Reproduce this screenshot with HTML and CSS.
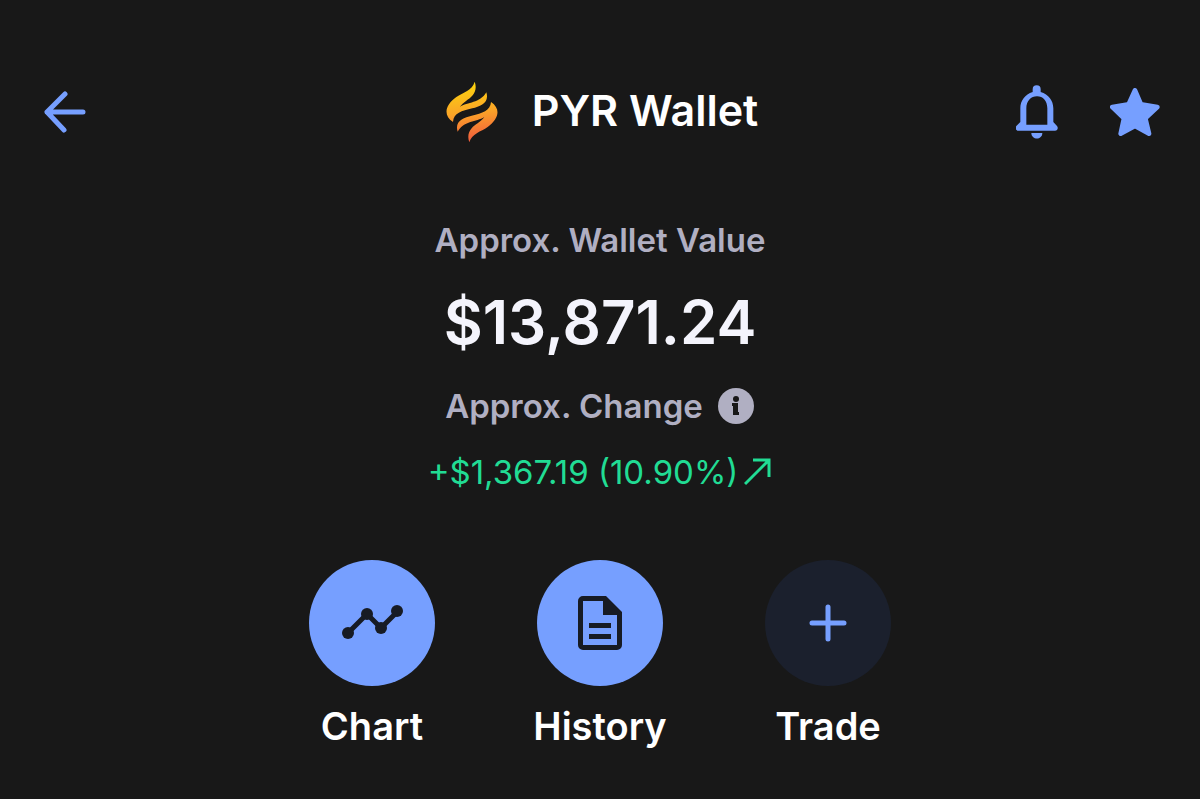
FILE: index.html
```
<!DOCTYPE html>
<html lang="en">

<head>
    <meta charset="utf-8">
    <meta name="viewport" content="width=device-width, initial-scale=1">
    <title>PYR Wallet</title>
    <link rel="stylesheet" href="styles.css">
</head>

<body>
    <header class="header">
        <button class="icon-btn back" aria-label="Back">
            <svg width="42" height="42" viewBox="0 0 42 42" fill="none" stroke="currentColor" stroke-width="5" stroke-linecap="round" stroke-linejoin="round">
                <path d="M21 3 3 21l17 18M3 21h36" />
            </svg>
        </button>

        <div class="title">
            <svg width="52" height="62" viewBox="9 4 156 186" aria-hidden="true">
                <defs>
                    <linearGradient id="flame" gradientUnits="userSpaceOnUse" x1="75" y1="6" x2="99" y2="188">
                        <stop offset="0" stop-color="#fbd60c" />
                        <stop offset="0.5" stop-color="#fba527" />
                        <stop offset="1" stop-color="#f0583f" />
                    </linearGradient>
                </defs>
                <g fill="url(#flame)">
                    <path d="M95 6C106 36 85 54 70 63C62 69 55 75 50 82C75 66 110 72 130 38C140 70 112 80 88 86C56 94 32 100 30 127C-1 106 7 76 40 52C60 38 88 32 95 6Z" />
                    <path d="M79 188C68 158 89 140 104 131C112 125 119 119 124 112C99 128 64 122 44 156C34 124 62 114 86 108C118 100 142 94 144 67C175 88 167 118 134 142C114 156 86 162 79 188Z" />
                </g>
            </svg>
            <h1>PYR Wallet</h1>
        </div>

        <div class="header-actions">
            <button class="icon-btn" aria-label="Price alerts">
                <svg width="42" height="54" viewBox="47 44 126 162">
                    <path fill="currentColor" fill-rule="evenodd" d="M97 65V57a12 12 0 0 1 24 0v8c24 7 38 26 38 49v41l11 12c5 6 1 14-6 14H54c-7 0-11-8-6-14l12-12v-41c0-23 14-42 37-49ZM78 163h63v-49c0-22-13-36-31-36s-32 14-32 36Z" />
                    <path fill="currentColor" d="M93 188h33c0 22-33 22-33 0Z" />
                </svg>
            </button>
            <button class="icon-btn" aria-label="Remove from favorites">
                <svg width="50" height="48" viewBox="329 53 150 144">
                    <path fill="currentColor" stroke="currentColor" stroke-width="14" stroke-linejoin="round" d="M404 60 422 102 471 110 435 144 446 190 404 167 361 190 371 144 336 110 385 102Z" />
                </svg>
            </button>
        </div>
    </header>

    <main>
        <section class="summary">
            <h2 class="label">Approx. Wallet Value</h2>
            <p class="amount">$13,871.24</p>
            <div class="change-label">
                <h2 class="label">Approx. Change</h2>
                <button class="icon-btn info" aria-label="About approximate change">
                    <svg width="38" height="38" viewBox="0 0 38 38">
                        <circle cx="19" cy="19" r="18" fill="currentColor" />
                        <circle class="cutout" cx="19" cy="12" r="3" />
                        <path class="cutout" d="M16 16h5v9h1v3h-6v-9h-1v-3z" />
                    </svg>
                </button>
            </div>
            <p class="change">
                +$1,367.19 (10.90%)
                <svg width="28" height="28" viewBox="0 0 28 28" fill="none" stroke="currentColor" stroke-width="3" aria-hidden="true">
                    <path d="M1 26 25 2M9 2h16v17" />
                </svg>
            </p>
        </section>

        <nav class="actions">
            <button class="action">
                <span class="action-icon">
                    <svg width="62" height="38" viewBox="0 0 62 38" fill="currentColor">
                        <path d="M7 29 26 10 40 24 56 8" fill="none" stroke="currentColor" stroke-width="5" />
                        <circle cx="7" cy="29" r="6" />
                        <circle cx="26" cy="10" r="6" />
                        <circle cx="40" cy="24" r="6" />
                        <circle cx="56" cy="7" r="6" />
                    </svg>
                </span>
                Chart
            </button>
            <button class="action">
                <span class="action-icon">
                    <svg width="44" height="56" viewBox="0 0 44 56" fill="currentColor">
                        <path fill-rule="evenodd" d="M5 1h23l16 16v33a5 5 0 0 1-5 5H5a5 5 0 0 1-5-5V6a5 5 0 0 1 5-5ZM5 6v44h34V20H25V6Z" />
                        <path d="M11 28h22v5H11zM11 39h22v5H11z" />
                    </svg>
                </span>
                History
            </button>
            <button class="action trade">
                <span class="action-icon">
                    <svg width="38" height="38" viewBox="0 0 38 38" fill="none" stroke="currentColor" stroke-width="5" stroke-linecap="round">
                        <path d="M19 3v32M3 19h32" />
                    </svg>
                </span>
                Trade
            </button>
        </nav>
    </main>
</body>

</html>
```
FILE: styles.css
```
body {
    margin: 0;
    background: #181818;
    color: #ffffff;
    font-family: Inter, sans-serif;
}

h1,
h2,
p {
    margin: 0;
}

button {
    padding: 0;
    border: none;
    background: none;
    color: inherit;
    font: inherit;
    cursor: pointer;
}

svg {
    display: block;
}

.header {
    display: grid;
    grid-template-columns: 1fr auto 1fr;
    align-items: center;
    padding: 80px 40px 0 44px;
}

.icon-btn {
    color: #769fff;
}

.back {
    justify-self: start;
}

.title {
    display: flex;
    align-items: center;
    gap: 34px;
}

.title h1 {
    padding-bottom: 4px;
    font-size: 43px;
    line-height: 60px;
    font-weight: 600;
}

.header-actions {
    display: flex;
    align-items: center;
    justify-content: flex-end;
    gap: 52px;
}

.summary {
    display: flex;
    flex-direction: column;
    align-items: center;
    padding-top: 76px;
}

.label {
    color: #b0afc2;
    font-size: 33px;
    line-height: 40px;
    font-weight: 600;
}

.amount {
    margin: 22px 0 24px;
    color: #f4f4fc;
    font-size: 60px;
    line-height: 80px;
    font-weight: 600;
}

.change-label {
    display: flex;
    align-items: center;
    gap: 14px;
}

.info {
    color: #b0afc2;
}

.cutout {
    fill: #181818;
}

.change {
    display: flex;
    align-items: center;
    gap: 6px;
    margin-top: 26px;
    color: #21dc94;
    font-size: 33px;
    line-height: 40px;
}

.actions {
    display: flex;
    justify-content: center;
    gap: 84px;
    padding: 68px 0 40px;
}

.action {
    display: flex;
    flex-direction: column;
    align-items: center;
    gap: 16px;
    width: 144px;
    font-size: 38px;
    line-height: 48px;
    font-weight: 600;
}

.action-icon {
    display: flex;
    align-items: center;
    justify-content: center;
    width: 126px;
    height: 126px;
    border-radius: 50%;
    background: #769fff;
    color: #171b24;
}

.trade .action-icon {
    background: #1b202d;
    color: #769fff;
}
```
